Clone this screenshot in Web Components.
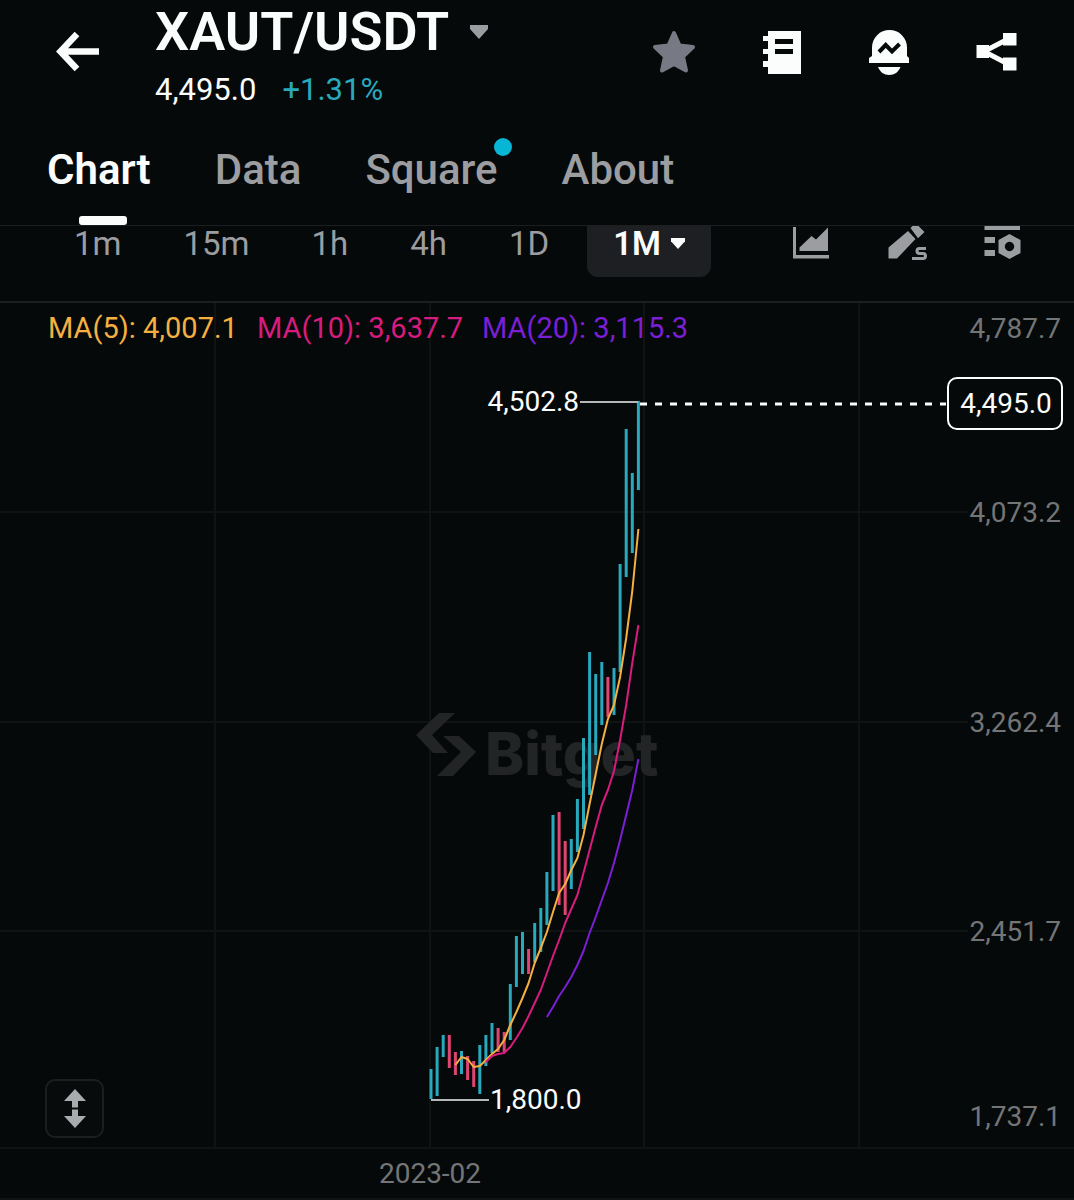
<!DOCTYPE html>
<html lang="en">
<head>
<meta charset="utf-8">
<meta name="viewport" content="width=device-width, initial-scale=1">
<title>XAUT/USDT</title>
<style>
    :root {
        --bg: #060909;
        --text: #fbfcfc;
        --muted: #9c9da0;
        --dim: #737577;
        --line: #1c1e1f;
        --grid: #101314;
        --up: #28a9be;
        --down: #dd4572;
        --accent: #06b6d4;
    }
    body { margin: 0; background: var(--bg); color: var(--text); font-family: Roboto, "Liberation Sans", sans-serif; }
</style>
</head>
<body>
<ticker-header pair="XAUT/USDT">
    <span slot="price">4,495.0</span>
    <span slot="change">+1.31%</span>
</ticker-header>
<page-tabs>
    <page-tab active>Chart</page-tab>
    <page-tab>Data</page-tab>
    <page-tab dot>Square</page-tab>
    <page-tab>About</page-tab>
</page-tabs>
<interval-bar></interval-bar>
<kline-chart></kline-chart>

<script>
const ICONS = {
    back: `<path d="M43 21.500H6M21 4L4.500 21.500L21 39" fill="none" stroke="currentColor" stroke-width="6.500"/>`,
    star: `<path d="M23 3L28.500 15.500L42 17L32 26.500L35 40.500L23 34L11 40.500L14 26.500L4 17L17.500 15.500Z" fill="currentColor" stroke="currentColor" stroke-width="4" stroke-linejoin="round"/>`,
    book: `<path fill="currentColor" fill-rule="evenodd" d="M9 1H42V44H9V37H4V31H9V24H4V19H9V11H4V6H9ZM16 9V14H34V9ZM16 19V24H34V19Z"/>`,
    bell: `<path d="M5 26V17.500a17.500 17.500 0 0 1 35 0V26L42 28V33H2V28Z" fill="currentColor"/>
        <path d="M11 37H33.500C31.500 42 27.500 45 22.200 45S13 42 11 37Z" fill="currentColor"/>
        <path d="M12 22L18.700 15L25 21.500L32.500 14" fill="none" stroke="#060909" stroke-width="4"/>`,
    share: `<path d="M35 8L9 21.500L35 35" fill="none" stroke="currentColor" stroke-width="5"/>
        <path d="M1.500 15H14V28H1.500ZM28 3H41.500V15.500H28ZM28 27.500H41.500V40.500H28Z" fill="currentColor"/>`,
    area: `<path d="M2 1H5V29H38V32.500H2Z" fill="currentColor"/>
        <path d="M8.500 21.500L20.500 10L25 13.500L37 1.500V25H8.500Z" fill="currentColor"/>`,
    pencil: `<path d="M1.500 21.500L21 5L28.500 13L10 32.500H1.500ZM23.500 2L25.500 0H31.500L37.500 6L31 12.300Z" fill="currentColor"/>
        <path d="M39 22.500H32.500a2.500 2.500 0 0 0 0 5H36a2.500 2.500 0 0 1 0 5H25" fill="none" stroke="currentColor" stroke-width="3"/>`,
    settings: `<path fill="currentColor" d="M1.500 0H37V4H1.500ZM1.500 11H12V17H1.500ZM1.500 24H12V30H1.500Z"/>
        <path fill="currentColor" fill-rule="evenodd" d="M26.500 8L37.500 14V27L26.500 33L15.500 27V14ZM26.500 15.800a4.700 4.700 0 1 0 .01 0Z"/>`,
    caret: `<path d="M0 0H18V4L9 14L0 4Z" fill="currentColor"/>`,
    updown: `<path d="M12 0L23 12H15V18.500H9V12H1ZM9 20.500H15V27H23L12 39L1 27H9Z" fill="currentColor"/>`
};

class AppIcon extends HTMLElement {
    constructor() {
        super();
        this.attachShadow({ mode: 'open' });
    }

    connectedCallback() {
        const box = this.getAttribute('box') || '44 44';
        this.shadowRoot.innerHTML = `
        <style>
            :host { display: block; flex: none; }
            svg { display: block; width: 100%; height: 100%; overflow: visible; }
        </style>
        <svg viewBox="0 0 ${box}" aria-hidden="true">${ICONS[this.getAttribute('name')]}</svg>
        `;
    }
}

class TickerHeader extends HTMLElement {
    constructor() {
        super();
        this.attachShadow({ mode: 'open' });
    }

    connectedCallback() {
        this.shadowRoot.innerHTML = `
        <style>
            :host { display: block; }
            header { display: flex; align-items: flex-start; padding: 0 55px 0 56px; }
            button { border: 0; margin: 0; padding: 0; background: none; color: inherit; font: inherit; cursor: pointer; }
            .icon { padding: 30px 0; }
            .icon app-icon { width: 44px; height: 44px; }
            .info { flex: 1; margin-left: 55px; }
            .pair { display: flex; align-items: center; gap: 21px; height: 64px; }
            h1 { margin: 0; font-size: 54px; line-height: 64px; font-weight: 600; }
            .pair app-icon { width: 18px; height: 14px; color: var(--muted); }
            .quote { display: flex; gap: 26px; font-size: 31px; line-height: 52px; }
            .change { color: var(--up); }
            nav { display: flex; gap: 64px; }
            .fav { color: #777a84; }
        </style>
        <header>
            <button class="icon" aria-label="Back"><app-icon name="back"></app-icon></button>
            <div class="info">
                <button class="pair"><h1>${this.getAttribute('pair')}</h1><app-icon name="caret" box="18 14"></app-icon></button>
                <div class="quote"><slot name="price"></slot><span class="change"><slot name="change"></slot></span></div>
            </div>
            <nav>
                <button class="icon fav" aria-label="Favorite"><app-icon name="star"></app-icon></button>
                <button class="icon" aria-label="Orders"><app-icon name="book"></app-icon></button>
                <button class="icon" aria-label="Price alert"><app-icon name="bell"></app-icon></button>
                <button class="icon" aria-label="Share"><app-icon name="share"></app-icon></button>
            </nav>
        </header>
        `;
    }
}

class PageTabs extends HTMLElement {
    constructor() {
        super();
        this.attachShadow({ mode: 'open' });
        this.shadowRoot.innerHTML = `
        <style>
            :host { display: block; border-bottom: 1px solid var(--line); }
            nav { display: flex; gap: 56px; padding: 0 47px; }
        </style>
        <nav><slot></slot></nav>
        `;
    }
}

class PageTab extends HTMLElement {
    constructor() {
        super();
        this.attachShadow({ mode: 'open' });
        this.shadowRoot.innerHTML = `
        <style>
            :host { display: block; }
            a { position: relative; display: block; padding: 29px 8px 30px 0; color: var(--muted); font-size: 42px; line-height: 50px; font-weight: 500; text-decoration: none; }
            :host([active]) a { color: var(--text); font-weight: 600; }
            :host([active]) a::after { content: ""; position: absolute; left: 50%; bottom: 0; width: 48px; height: 9px; margin-left: -24px; border-radius: 3px; background: var(--text); }
            :host([dot]) a::before { content: ""; position: absolute; right: -6px; top: 22px; width: 18px; height: 18px; border-radius: 50%; background: var(--accent); }
        </style>
        <a href="#"><slot></slot></a>
        `;
    }
}

class IntervalBar extends HTMLElement {
    constructor() {
        super();
        this.attachShadow({ mode: 'open' });
        this.intervals = ["1m", "15m", "1h", "4h", "1D"];
    }

    connectedCallback() {
        this.shadowRoot.innerHTML = `
        <style>
            :host { display: block; border-bottom: 2px solid var(--line); }
            .bar { display: flex; justify-content: space-between; padding: 0 51px 24px 50px; }
            .group { display: flex; gap: 14px; }
            .tools { display: flex; align-items: flex-start; gap: 56px; }
            button { display: block; border: 0; margin: 0; padding: 0 24px 16px; background: none; color: var(--muted); font: inherit; font-size: 33px; line-height: 35px; cursor: pointer; }
            .more { display: flex; align-items: center; gap: 10px; padding: 0 26px 16px; border-radius: 0 0 11px 11px; background: #1e1f23; color: var(--text); font-weight: 600; }
            .more app-icon { width: 14px; height: 11px; }
            .tools button { padding: 0; }
            .tools app-icon { width: 40px; height: 38px; }
        </style>
        <div class="bar">
            <div class="group">
                ${this.intervals.map(i => `<button>${i}</button>`).join('')}
                <button class="more">1M<app-icon name="caret" box="18 14"></app-icon></button>
            </div>
            <div class="tools">
                <button aria-label="Chart type"><app-icon name="area" box="40 38"></app-icon></button>
                <button aria-label="Drawing tools"><app-icon name="pencil" box="40 38"></app-icon></button>
                <button aria-label="Chart settings"><app-icon name="settings" box="40 38"></app-icon></button>
            </div>
        </div>
        `;
    }
}

class KlineChart extends HTMLElement {
    constructor() {
        super();
        this.attachShadow({ mode: 'open' });
        this.firstX = 431;
        this.step = 6.1;
        // top, bottom, 1 = up / 0 = down
        this.candles = [
            [766, 796, 1], [744, 793, 1], [732, 754, 1], [732, 765, 0], [749, 772, 0], [748, 771, 1], [753, 777, 0],
            [758, 784, 0], [742, 791, 1], [732, 763, 1], [720, 750, 1], [725, 749, 0], [729, 749, 0], [681, 737, 1],
            [633, 684, 1], [629, 671, 1], [646, 671, 0], [620, 659, 1], [605, 649, 1], [569, 622, 1], [512, 588, 1],
            [509, 602, 0], [538, 612, 0], [536, 586, 1], [496, 549, 1], [435, 526, 1], [349, 492, 1], [371, 452, 1],
            [359, 422, 1], [374, 414, 0], [365, 412, 1], [261, 369, 1], [126, 274, 1], [170, 250, 1], [98, 187, 1]
        ];
        this.averages = [
            { from: 4, color: '#f5b041', label: 'MA(5): 4,007.1', x: 48,
                ys: [762, 754, 756, 764, 763, 757, 751, 746, 737, 722, 709, 695, 680, 660, 645, 629, 609, 590, 581, 567, 555, 532, 501, 471, 441, 416, 402, 374, 335, 288, 226] },
            { from: 9, color: '#d81b7f', label: 'MA(10): 3,637.7', x: 257,
                ys: [759, 753, 751, 750, 744, 735, 725, 713, 700, 687, 670, 653, 637, 620, 606, 592, 570, 547, 524, 502, 487, 468, 437, 402, 360, 322] },
            { from: 19, color: '#7a1fd6', label: 'MA(20): 3,115.3', x: 482,
                ys: [714, 704, 693, 684, 674, 662, 648, 630, 614, 597, 580, 560, 537, 512, 487, 456] }
        ];
        this.levels = [["4,787.7", 25], ["4,073.2", 209], ["3,262.4", 419], ["2,451.7", 628], ["1,737.1", 813]];
    }

    connectedCallback() {
        this.shadowRoot.innerHTML = `
        <style>
            :host { display: block; position: relative; }
            svg { display: block; width: 100%; height: auto; font-size: 28px; }
            .grid { stroke: var(--grid); stroke-width: 2; }
            .legend { font-size: 29px; }
            .axis { fill: var(--dim); text-anchor: end; }
            .date { fill: var(--dim); text-anchor: middle; }
            .mark { fill: #222425; }
            .brand { font-family: Inter, sans-serif; font-size: 59px; font-weight: 800; }
            .value { fill: var(--text); }
            .leader { stroke: #b4b6b7; stroke-width: 2; }
            .last { stroke: var(--text); stroke-width: 3; stroke-dasharray: 7 8; }
            .tag { fill: var(--bg); stroke: var(--text); stroke-width: 2; }
            button { position: absolute; left: 45px; bottom: 62px; display: flex; align-items: center; justify-content: center; width: 59px; height: 59px; padding: 0; border: 2px solid #1c1e1f; border-radius: 10px; background: #080b0b; color: #a9abae; cursor: pointer; }
            button app-icon { width: 24px; height: 39px; }
        </style>
        <svg viewBox="0 0 1074 897">
            <path class="grid" d="M215 0V845M430 0V845M644 0V845M859 0V845M0 209H968M0 419H968M0 628H968M0 845H1074M0 896H1074"/>
            <path class="mark" d="M439 410H455L432 432L448 450H433L416 432ZM443 433H459L476 449L453 473H437L461 449Z"/>
            <text class="mark brand" x="485" y="472">Bitget</text>
            <g id="candles"></g>
            <g id="averages"></g>
            <g id="levels"></g>
            <path class="leader" d="M580 99H638M431 797H489"/>
            <text class="value" x="579" y="108" text-anchor="end">4,502.8</text>
            <text class="value" x="490" y="806">1,800.0</text>
            <line class="last" x1="640" y1="101" x2="946" y2="101"/>
            <rect class="tag" x="948" y="75" width="114" height="51" rx="9"/>
            <text class="value" x="1006" y="110" text-anchor="middle">4,495.0</text>
            <text class="date" x="430" y="880">2023-02</text>
        </svg>
        <button aria-label="Resize chart"><app-icon name="updown" box="24 39"></app-icon></button>
        `;

        this.drawCandles();
        this.drawAverages();
        this.drawLevels();
    }

    xAt(i) {
        return (this.firstX + i * this.step).toFixed(1);
    }

    drawCandles() {
        const group = this.shadowRoot.getElementById('candles');
        this.candles.forEach(([top, bottom, up], i) => {
            this.create(group, 'line', {
                x1: this.xAt(i), x2: this.xAt(i), y1: top, y2: bottom,
                stroke: up ? 'var(--up)' : 'var(--down)', 'stroke-width': 3
            });
        });
    }

    drawAverages() {
        const group = this.shadowRoot.getElementById('averages');
        for (const ma of this.averages) {
            const points = ma.ys.map((y, i) => `${this.xAt(ma.from + i)},${y}`).join(' ');
            this.create(group, 'polyline', { points, fill: 'none', stroke: ma.color, 'stroke-width': 2, 'stroke-linejoin': 'round' });
            this.create(group, 'text', { class: 'legend', x: ma.x, y: 35, fill: ma.color }, ma.label);
        }
    }

    drawLevels() {
        const group = this.shadowRoot.getElementById('levels');
        for (const [label, y] of this.levels) {
            this.create(group, 'text', { class: 'axis', x: 1061, y: y + 10 }, label);
        }
    }

    create(group, tag, attrs, txt) {
        const node = document.createElementNS("http://www.w3.org/2000/svg", tag);
        for (const key in attrs) node.setAttribute(key, attrs[key]);
        if (txt) node.textContent = txt;
        group.appendChild(node);
    }
}

customElements.define('app-icon', AppIcon);
customElements.define('ticker-header', TickerHeader);
customElements.define('page-tab', PageTab);
customElements.define('page-tabs', PageTabs);
customElements.define('interval-bar', IntervalBar);
customElements.define('kline-chart', KlineChart);
</script>
</body>
</html>
